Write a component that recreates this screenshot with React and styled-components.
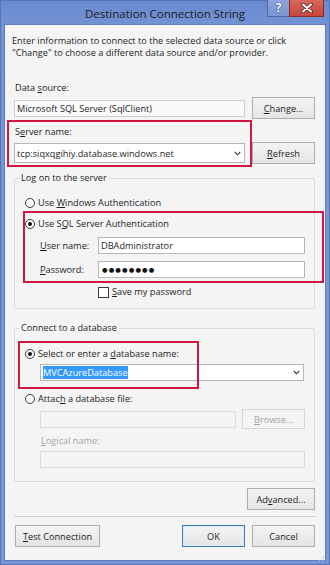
import React from "react";
import styled, { createGlobalStyle } from "styled-components";

const GlobalStyle = createGlobalStyle`
  html, body {
    margin: 0;
    padding: 0;
    background: #7391d1;
  }
  body {
    font-family: "Open Sans", "Noto Sans", sans-serif;
    font-size: 9.2px;
    color: #1e1e1e;
  }
`;

const App = () => {
  return (
    <>
      <GlobalStyle />
      <Window>
        <TitleBar>
          <Title>Destination Connection String</Title>
          <Captions>
            <HelpButton>?</HelpButton>
            <CloseButton>
              <svg width="12" height="10" viewBox="0 0 12 10">
                <path d="M2 1.5 L10 8.5 M10 1.5 L2 8.5" stroke="#4a1c17" strokeWidth="3.6" strokeLinecap="round" />
                <path d="M2 1.5 L10 8.5 M10 1.5 L2 8.5" stroke="#fff" strokeWidth="2" strokeLinecap="round" />
              </svg>
            </CloseButton>
          </Captions>
        </TitleBar>

        <Client>
          <Intro>
            Enter information to connect to the selected data source or click
            <br />
            "Change" to choose a different data source and/or provider.
          </Intro>

          <Label $mt={23}>
            Data <Key>s</Key>ource:
          </Label>
          <Row $mt={3}>
            <TextBox $w={231} $readonly>
              Microsoft SQL Server (SqlClient)
            </TextBox>
            <Button $w={63}>
              <Key>C</Key>hange...
            </Button>
          </Row>

          <ServerRow>
            <ServerColumn>
              <Label>
                S<Key>e</Key>rver name:
              </Label>
              <Combo $w={231} $h={20} $mt={5}>
                <ComboText>tcp:siqxqgihiy.database.windows.net</ComboText>
                <Chevron />
              </Combo>
              <Highlight $top={-6} $left={-7} $right={-7} $bottom={-4} />
            </ServerColumn>
            <Button $w={63} $mb={-1}>
              <Key>R</Key>efresh
            </Button>
          </ServerRow>

          <Group $mt={9} $pb={10}>
            <Legend>Log on to the server</Legend>
            <RadioRow $mt={13}>
              <Radio />
              <span>
                Use <Key>W</Key>indows Authentication
              </span>
            </RadioRow>
            <Section $mt={9}>
              <RadioRow>
                <Radio $checked />
                <span>
                  Use S<Key>Q</Key>L Server Authentication
                </span>
              </RadioRow>
              <FieldRow $mt={7}>
                <FieldLabel>
                  <Key>U</Key>ser name:
                </FieldLabel>
                <TextBox $w={207}>DBAdministrator</TextBox>
              </FieldRow>
              <FieldRow $mt={7}>
                <FieldLabel>
                  <Key>P</Key>assword:
                </FieldLabel>
                <TextBox $w={207}>
                  <Dots>●●●●●●●●</Dots>
                </TextBox>
              </FieldRow>
              <Highlight $top={-7} $left={8} $right={-10} $bottom={-5} />
            </Section>
            <CheckRow $mt={8}>
              <CheckBox />
              <span>
                <Key>S</Key>ave my password
              </span>
            </CheckRow>
          </Group>

          <Group $mt={13} $pb={13}>
            <Legend>Connect to a database</Legend>
            <Section $mt={14}>
              <RadioRow>
                <Radio $checked />
                <span>
                  Select or enter a <Key>d</Key>atabase name:
                </span>
              </RadioRow>
              <Combo $w={264} $h={17} $mt={4} $ml={25}>
                <ComboText>
                  <Selected>MVCAzureDatabase</Selected>
                </ComboText>
                <Chevron />
              </Combo>
              <Highlight $top={-7} $left={3} $width={181} $height={48} />
            </Section>
            <RadioRow $mt={12}>
              <Radio />
              <span>
                Attac<Key>h</Key> a database file:
              </span>
            </RadioRow>
            <Row $mt={4} $ml={25} $gap={6}>
              <TextBox $w={196} $disabled />
              <Button $w={63} $h={20} $disabled>
                <Key>B</Key>rowse...
              </Button>
            </Row>
            <Label $mt={6} $ml={25} $disabled>
              <Key>L</Key>ogical name:
            </Label>
            <TextBox $w={265} $mt={4} $ml={25} $disabled />
          </Group>

          <Button $w={68} $mt={6} $end>
            Ad<Key>v</Key>anced...
          </Button>
          <Separator />
          <Footer>
            <Button $w={85}>
              <Key>T</Key>est Connection
            </Button>
            <FooterRight>
              <Button $w={63} $default>
                OK
              </Button>
              <Button $w={63}>Cancel</Button>
            </FooterRight>
          </Footer>
          <Grip>
            <svg width="8" height="8" viewBox="0 0 8 8">
              <rect x="6" y="2" width="1" height="1" fill="#b5b5b5" />
              <rect x="4" y="4" width="1" height="1" fill="#b5b5b5" />
              <rect x="6" y="4" width="1" height="1" fill="#b5b5b5" />
              <rect x="2" y="6" width="1" height="1" fill="#b5b5b5" />
              <rect x="4" y="6" width="1" height="1" fill="#b5b5b5" />
              <rect x="6" y="6" width="1" height="1" fill="#b5b5b5" />
            </svg>
          </Grip>
        </Client>
      </Window>
    </>
  );
};

const Chevron = () => (
  <ChevronBox>
    <svg width="7" height="5" viewBox="0 0 7 5">
      <path d="M0.8 1 L3.5 3.8 L6.2 1" fill="none" stroke="#333" strokeWidth="1.1" />
    </svg>
  </ChevronBox>
);

export default App;

const Window = styled.div`
  width: 330px;
  height: 565px;
  box-sizing: border-box;
  border: 1px solid #5674b6;
  background: linear-gradient(180deg, #6a8ad0 0%, #7695d5 30px, #7896d6 100%);
  padding: 0 3px 3px 3px;
  display: flex;
  flex-direction: column;
`;

const TitleBar = styled.div`
  height: 23px;
  position: relative;
  display: flex;
  align-items: center;
  justify-content: center;
  flex: none;
`;

const Title = styled.div`
  font-size: 11.5px;
  color: #1b1b1b;
  margin-top: 1px;
`;

const Captions = styled.div`
  position: absolute;
  top: -1px;
  right: 2px;
  display: flex;
`;

const HelpButton = styled.div`
  width: 22px;
  height: 17px;
  box-sizing: border-box;
  border: 1px solid #4f6aa8;
  border-top: none;
  border-right: none;
  background: linear-gradient(180deg, #8aa4dc, #7a97d4);
  color: #fff;
  font-weight: 700;
  font-size: 12px;
  line-height: 16px;
  text-align: center;
  text-shadow: 0 0 1px #1c2f5c, 0 0 1px #1c2f5c;
`;

const CloseButton = styled.div`
  width: 35px;
  height: 17px;
  box-sizing: border-box;
  border: 1px solid #8a2c24;
  border-top: none;
  background: linear-gradient(180deg, #d9675b, #c7463b);
  display: flex;
  align-items: center;
  justify-content: center;
`;

const Client = styled.div`
  flex: 1;
  position: relative;
  background: #f4f4f4;
  border: 1px solid #5f7dbd;
  padding: 0 10px 0 9px;
  display: flex;
  flex-direction: column;
`;

const Intro = styled.div`
  margin: 10px 0 0 -2px;
  line-height: 12px;
`;

const Key = styled.u`
  text-decoration-thickness: 1px;
  text-underline-offset: 1px;
`;

const Label = styled.div`
  line-height: 12px;
  margin-top: ${(p) => p.$mt || 0}px;
  margin-left: ${(p) => p.$ml || 0}px;
  padding-left: 1px;
  color: ${(p) => (p.$disabled ? "#a6a6a6" : "#1e1e1e")};
`;

const Row = styled.div`
  display: flex;
  align-items: center;
  gap: ${(p) => p.$gap || 7}px;
  margin-top: ${(p) => p.$mt || 0}px;
  margin-left: ${(p) => p.$ml || 0}px;
`;

const TextBox = styled.div`
  width: ${(p) => p.$w}px;
  height: ${(p) => p.$h || 17}px;
  margin-top: ${(p) => p.$mt || 0}px;
  margin-left: ${(p) => p.$ml || 0}px;
  box-sizing: border-box;
  flex: none;
  border: 1px solid ${(p) => (p.$disabled ? "#dadada" : p.$readonly ? "#cdcdcd" : "#b4b7bd")};
  background: ${(p) => (p.$disabled ? "#f4f4f4" : p.$readonly ? "#fafafa" : "#fff")};
  display: flex;
  align-items: center;
  padding: 0 2px;
  white-space: nowrap;
  overflow: hidden;
`;

const Combo = styled(TextBox)`
  padding: 0 0 0 2px;
  border-color: #b4b7bd;
  background: #fff;
`;

const ComboText = styled.div`
  flex: 1;
  overflow: hidden;
  white-space: nowrap;
`;

const ChevronBox = styled.div`
  width: 14px;
  display: flex;
  align-items: center;
  justify-content: center;
  flex: none;
`;

const Selected = styled.span`
  background: #3399ff;
  color: #fff;
  padding: 1px 0;
`;

const Dots = styled.span`
  font-family: "DejaVu Sans", sans-serif;
  font-size: 6.4px;
  letter-spacing: 1.1px;
  color: #111;
  margin-left: 1px;
`;

const Button = styled.button`
  width: ${(p) => p.$w}px;
  height: ${(p) => p.$h || 22}px;
  margin-top: ${(p) => p.$mt || 0}px;
  margin-bottom: ${(p) => p.$mb || 0}px;
  align-self: ${(p) => (p.$end ? "flex-end" : "auto")};
  flex: none;
  box-sizing: border-box;
  padding: 0;
  font-family: inherit;
  font-size: 9.2px;
  color: ${(p) => (p.$disabled ? "#a3a3a3" : "#1e1e1e")};
  border: 1px solid ${(p) => (p.$default ? "#3d7fb8" : p.$disabled ? "#d5d5d5" : "#adadad")};
  background: ${(p) =>
    p.$disabled ? "#f4f4f4" : "linear-gradient(180deg, #f4f4f4 0%, #ececec 50%, #e4e4e4 100%)"};
  box-shadow: ${(p) => (p.$default ? "inset 0 0 0 1px #d7e8f7" : "none")};
`;

const ServerRow = styled.div`
  display: flex;
  align-items: flex-end;
  gap: 7px;
  margin-top: 7px;
`;

const ServerColumn = styled.div`
  position: relative;
  display: flex;
  flex-direction: column;
`;

const Highlight = styled.div`
  position: absolute;
  top: ${(p) => p.$top}px;
  left: ${(p) => p.$left}px;
  ${(p) => (p.$right !== undefined ? `right: ${p.$right}px;` : "")}
  ${(p) => (p.$bottom !== undefined ? `bottom: ${p.$bottom}px;` : "")}
  ${(p) => (p.$width !== undefined ? `width: ${p.$width}px;` : "")}
  ${(p) => (p.$height !== undefined ? `height: ${p.$height}px;` : "")}
  box-sizing: border-box;
  border: 2.6px solid #d0173f;
  pointer-events: none;
`;

const Group = styled.fieldset`
  margin: ${(p) => p.$mt}px 0 0 0;
  padding: 0 0 ${(p) => p.$pb}px 0;
  border: 1px solid #dcdcdc;
  border-radius: 2px;
  min-inline-size: 0;
  display: flex;
  flex-direction: column;
`;

const Legend = styled.legend`
  padding: 0 2px;
  margin-left: 4px;
  line-height: 12px;
`;

const Section = styled.div`
  position: relative;
  display: flex;
  flex-direction: column;
  margin-top: ${(p) => p.$mt || 0}px;
`;

const RadioRow = styled.div`
  display: flex;
  align-items: center;
  gap: 3px;
  line-height: 12px;
  padding-left: 10px;
  margin-top: ${(p) => p.$mt || 0}px;
`;

const Radio = styled.span`
  width: 10px;
  height: 10px;
  box-sizing: border-box;
  border-radius: 50%;
  border: 1px solid #3a3a3a;
  background: #fff;
  position: relative;
  flex: none;

  &::after {
    content: "";
    position: absolute;
    inset: 2px;
    border-radius: 50%;
    background: ${(p) => (p.$checked ? "#111" : "transparent")};
  }
`;

const FieldRow = styled.div`
  display: flex;
  align-items: center;
  padding-left: 25px;
  margin-top: ${(p) => p.$mt || 0}px;
`;

const FieldLabel = styled.div`
  width: 58px;
  flex: none;
`;

const CheckRow = styled.div`
  display: flex;
  align-items: center;
  gap: 3px;
  line-height: 12px;
  padding-left: 83px;
  margin-top: ${(p) => p.$mt || 0}px;
`;

const CheckBox = styled.span`
  width: 11px;
  height: 11px;
  box-sizing: border-box;
  border: 1px solid #3a3a3a;
  background: #fff;
  flex: none;
`;

const Separator = styled.div`
  height: 1px;
  background: #d2d2d2;
  margin-top: 6px;
  flex: none;
`;

const Footer = styled.div`
  display: flex;
  align-items: center;
  justify-content: space-between;
  margin-top: 8px;
  padding-left: 1px;
`;

const FooterRight = styled.div`
  display: flex;
  gap: 7px;
`;

const Grip = styled.div`
  position: absolute;
  right: 0;
  bottom: 0;
  width: 8px;
  height: 8px;
`;
